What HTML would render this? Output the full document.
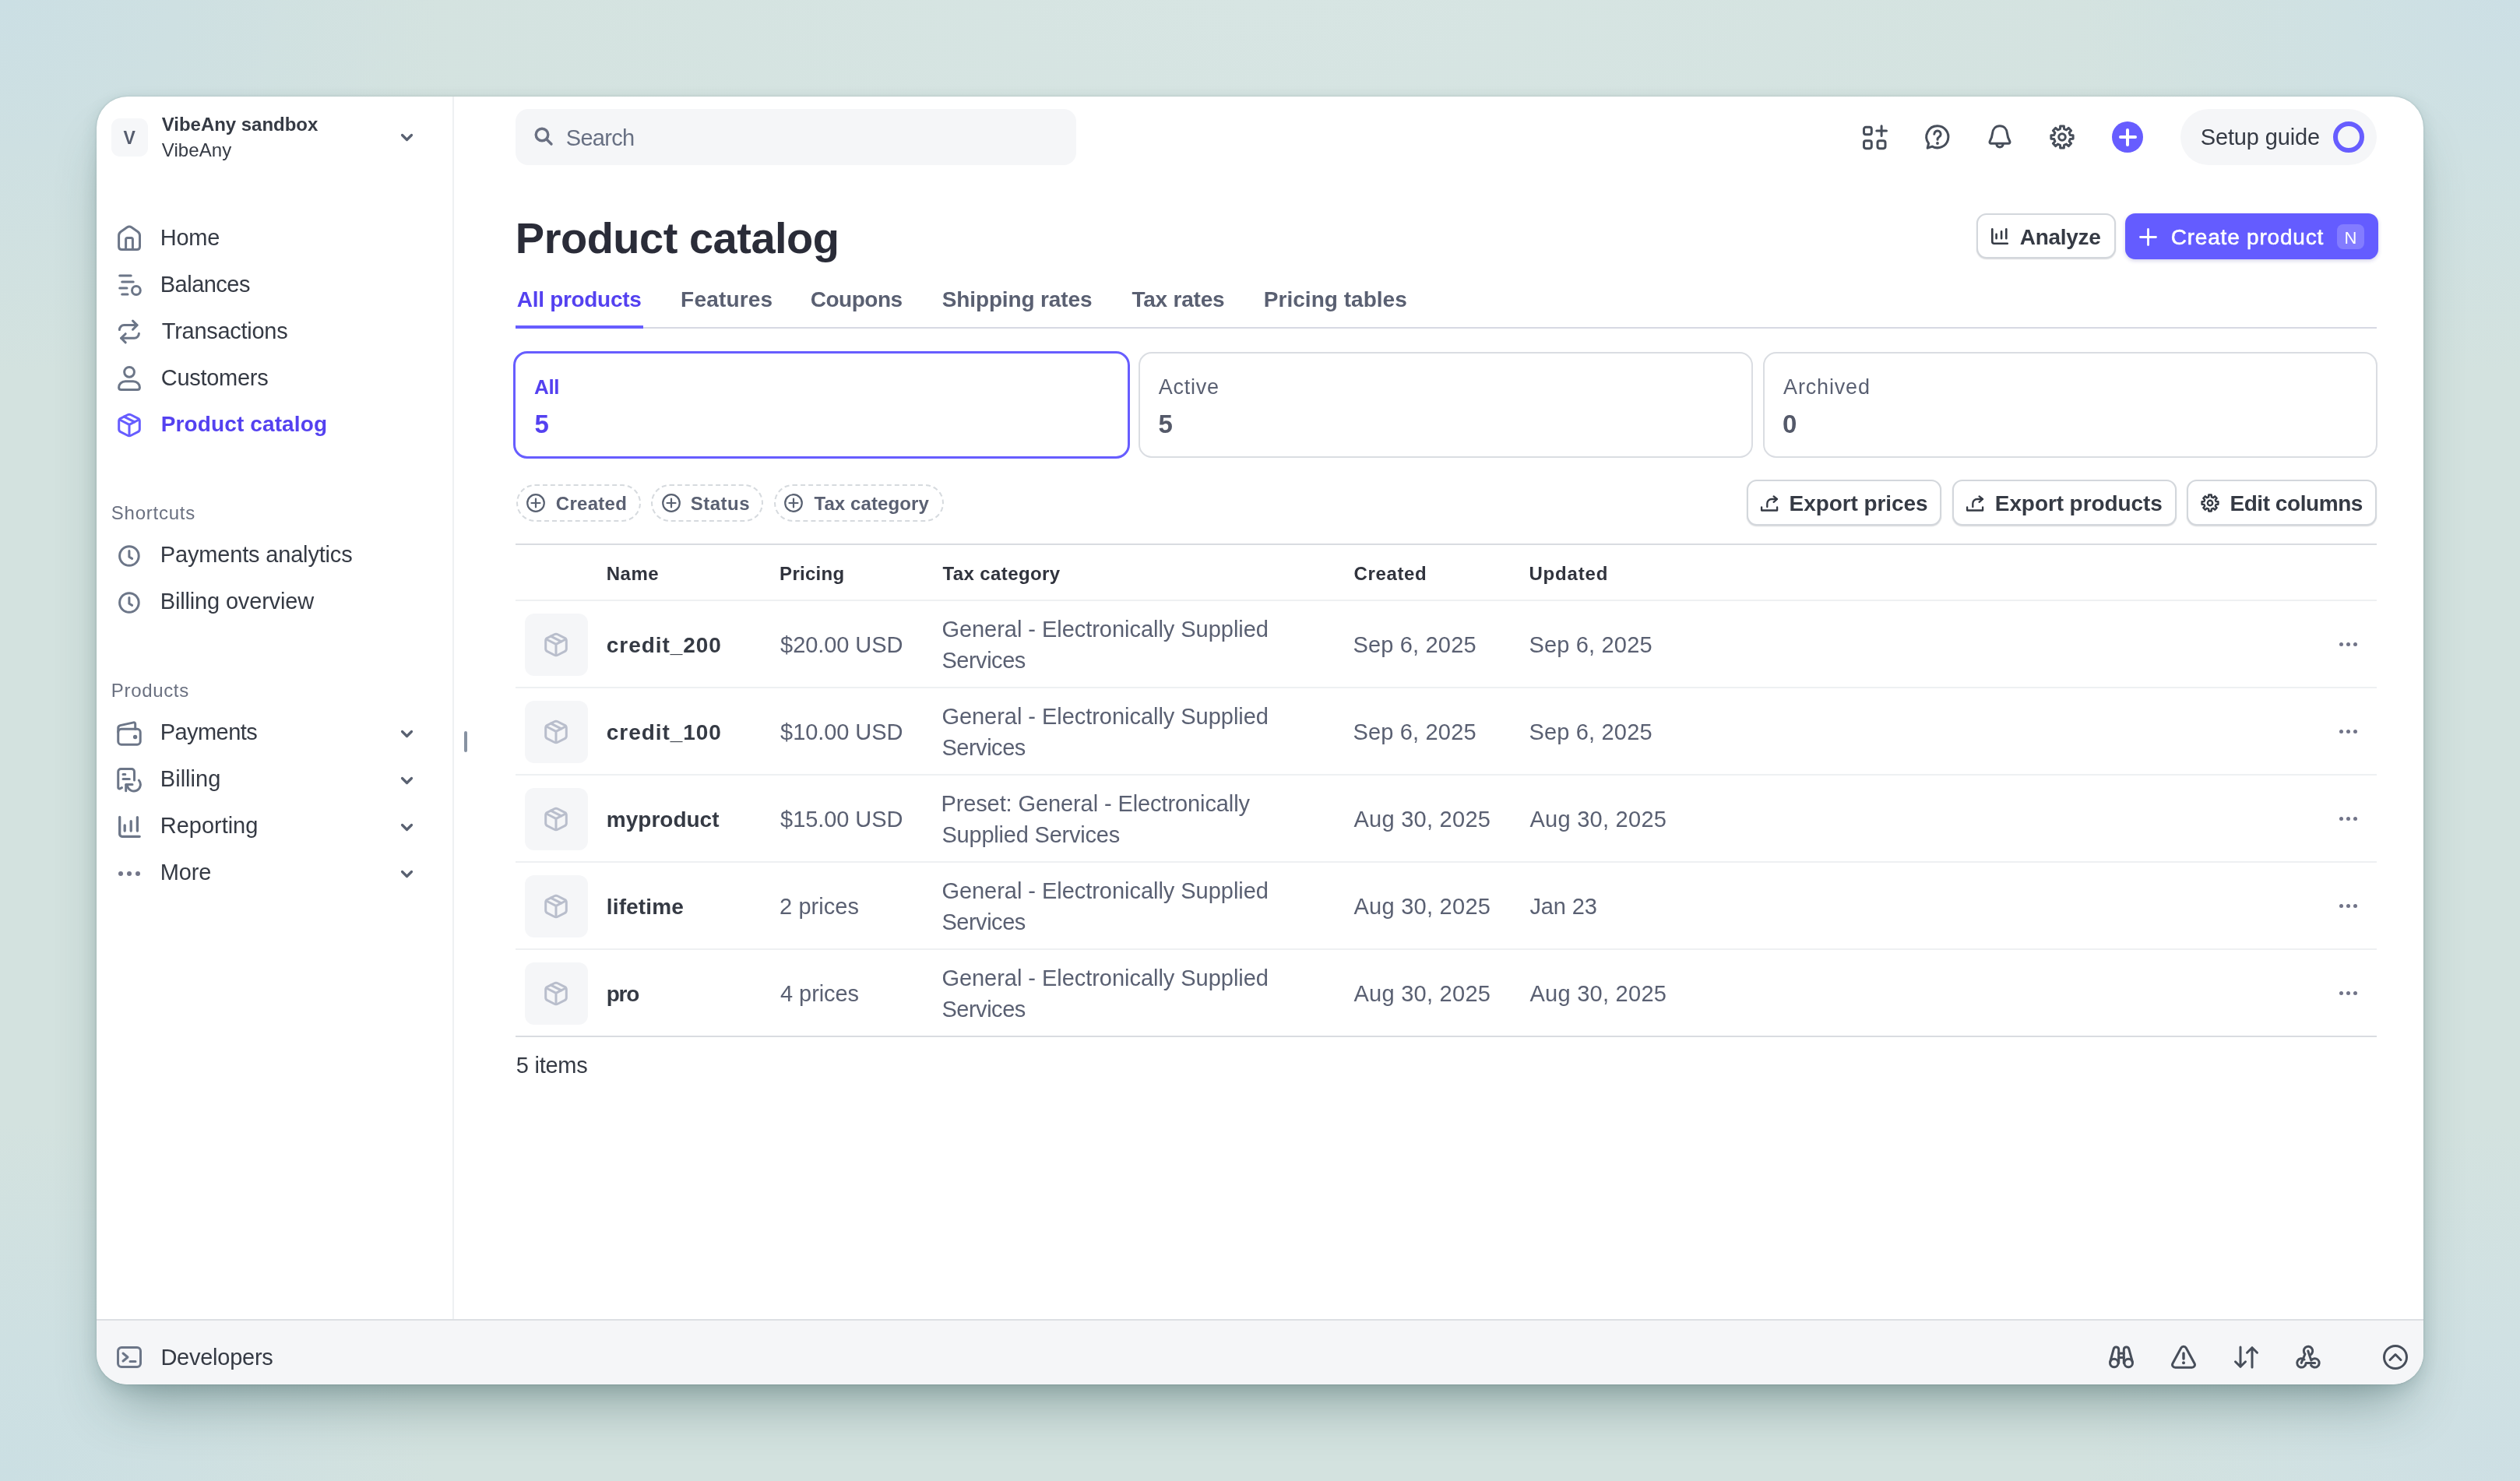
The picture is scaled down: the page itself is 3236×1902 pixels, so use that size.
<!DOCTYPE html>
<html lang="en"><head><meta charset="utf-8"><title>Product catalog</title>
<style>
*{margin:0;padding:0}
html,body{width:3236px;height:1902px;overflow:hidden}
body{position:relative;font-family:"Liberation Sans",sans-serif;
background:
radial-gradient(ellipse 560px 480px at 0% 0%, #cbdfe4 0%, #cee0e2 40%, rgba(208,225,225,0) 100%),
radial-gradient(ellipse 560px 480px at 100% 0%, #ccdfe5 0%, #cfe1e3 40%, rgba(209,226,226,0) 100%),
radial-gradient(ellipse 560px 460px at 0% 100%, #cbdfe3 0%, #cee0e2 40%, rgba(208,225,225,0) 100%),
radial-gradient(ellipse 560px 460px at 100% 100%, #cddfe4 0%, #d0e1e3 40%, rgba(209,226,226,0) 100%),
radial-gradient(ellipse 1400px 500px at 50% 0%, #d7e5e3 0%, rgba(215,229,227,0) 100%),
#d3e2df;}
#win{position:absolute;left:124px;top:124px;width:2988px;height:1654px;background:#fff;border-radius:40px;
box-shadow:0 44px 70px -24px rgba(35,75,75,.42),0 6px 20px rgba(35,75,75,.15),0 0 3px rgba(35,75,75,.22)}
.b,.t,.ic{position:absolute;display:block}
.t{white-space:pre}
.texts{will-change:transform}
h1{font-weight:700}
.ic{overflow:visible}
</style></head>
<body>
<div id="win"></div>
<aside id="sidebar">
<div class="boxes">
<div class="b" style="left:142.5px;top:152px;width:47.5px;height:49px;background:#f6f7f9;border-radius:11px"></div>
<div class="b" style="left:152px;top:1118.9px;width:6px;height:6px;background:#737689;border-radius:50%"></div>
<div class="b" style="left:163px;top:1118.9px;width:6px;height:6px;background:#737689;border-radius:50%"></div>
<div class="b" style="left:174px;top:1118.9px;width:6px;height:6px;background:#737689;border-radius:50%"></div>
</div>
<div class="icons">
<svg class="ic" style="left:150px;top:290px" width="32" height="32" viewBox="0 0 32 32" fill="none" stroke="#6c7688" stroke-width="3" stroke-linecap="round" stroke-linejoin="round" ><path d="M19.02 2.03 L26.86 7.39 Q29.50 9.20 29.50 12.40 L29.50 26.70 Q29.50 30.50 25.70 30.50 L6.40 30.50 Q2.60 30.50 2.60 26.70 L2.60 12.40 Q2.60 9.20 5.24 7.39 L13.08 2.03 Q16.05 0.00 19.02 2.03 Z"/><path d="M11.6 30.5 V17.5 a2 2 0 0 1 2 -2 H18.4 a2 2 0 0 1 2 2 V30.5"/></svg>
<svg class="ic" style="left:150px;top:350px" width="32" height="32" viewBox="0 0 32 32" fill="none" stroke="#6c7688" stroke-width="3" stroke-linecap="round" stroke-linejoin="round" ><path d="M3.7 4 H18.2 M6.7 12 H21.2 M3.7 20 H13 M6.7 28 H14"/><circle cx="24.9" cy="23" r="5.400"/></svg>
<svg class="ic" style="left:150px;top:410px" width="32" height="32" viewBox="0 0 32 32" fill="none" stroke="#6c7688" stroke-width="3" stroke-linecap="round" stroke-linejoin="round" ><path d="M20.5 2 L26 7.6 L20.5 13.2"/><path d="M26 7.6 H9.4 a6 6 0 0 0 -6 6"/><path d="M11.2 18.7 L5.6 24.3 L11.2 29.9"/><path d="M5.6 24.3 H22.4 a6 6 0 0 0 6 -6"/></svg>
<svg class="ic" style="left:150px;top:470px" width="32" height="32" viewBox="0 0 32 32" fill="none" stroke="#6c7688" stroke-width="3" stroke-linecap="round" stroke-linejoin="round" ><circle cx="16.05" cy="7.8" r="6.400"/><path d="M11 19.7 H21 C26 19.7 29.4 23.5 29.4 27.4 C29.4 29.2 28.2 30.4 26.4 30.4 H5.6 C3.8 30.4 2.6 29.2 2.6 27.4 C2.6 23.5 6 19.7 11 19.7 Z"/></svg>
<svg class="ic" style="left:150px;top:530px" width="32" height="32" viewBox="0 0 32 32" fill="none" stroke="#675dff" stroke-width="3" stroke-linecap="round" stroke-linejoin="round" ><path d="M18.14 2.78 L27.16 7.32 Q29.30 8.40 29.30 10.80 L29.30 21.20 Q29.30 23.60 27.16 24.68 L18.14 29.22 Q16.00 30.30 13.86 29.22 L4.84 24.68 Q2.70 23.60 2.70 21.20 L2.70 10.80 Q2.70 8.40 4.84 7.32 L13.86 2.78 Q16.00 1.70 18.14 2.78 Z"/><path d="M3.6 9 L16 15.3 L28.4 9 M16 15.3 V29.6"/><path d="M9.300 5.100 L22.700 11.900"/></svg>
<svg class="ic" style="left:150px;top:698px" width="32" height="32" viewBox="0 0 32 32" fill="none" stroke="#6c7688" stroke-width="3" stroke-linecap="round" stroke-linejoin="round" ><circle cx="15.900" cy="16" r="12.300"/><path d="M15.900 9.500 V17.300 L19.600 19.400"/></svg>
<svg class="ic" style="left:150px;top:758px" width="32" height="32" viewBox="0 0 32 32" fill="none" stroke="#6c7688" stroke-width="3" stroke-linecap="round" stroke-linejoin="round" ><circle cx="15.900" cy="16" r="12.300"/><path d="M15.900 9.500 V17.300 L19.600 19.400"/></svg>
<svg class="ic" style="left:150px;top:926px" width="32" height="32" viewBox="0 0 32 32" fill="none" stroke="#6c7688" stroke-width="3" stroke-linecap="round" stroke-linejoin="round" color="#6c7688"><rect x="1.750" y="10.350" width="28.450" height="19.850" rx="4"/><path d="M1.750 14 V9 a3.500 3.500 0 0 1 2.600 -3.400 L21.500 1.900 a1.800 1.800 0 0 1 2.200 1.750 V10.350"/><circle cx="23.600" cy="20.500" r="1.200" fill="currentColor"/></svg>
<svg class="ic" style="left:150px;top:986px" width="32" height="32" viewBox="0 0 32 32" fill="none" stroke="#6c7688" stroke-width="3" stroke-linecap="round" stroke-linejoin="round" ><path d="M22.5 16 V5 a3.500 3.500 0 0 0 -3.500 -3.500 H5.250 a3.500 3.500 0 0 0 -3.500 3.500 V25.500 a1.500 1.500 0 0 0 2.200 1.300 L6.500 25.600"/><path d="M8 8.500 H10.800 M8 14.400 H16.300"/><path d="M20 21.600 H11.700 V29.800"/><path d="M28.400 16.100 A8.500 8.500 0 1 1 13.600 23.500 L12 22"/></svg>
<svg class="ic" style="left:150px;top:1046px" width="32" height="32" viewBox="0 0 32 32" fill="none" stroke="#6c7688" stroke-width="3" stroke-linecap="round" stroke-linejoin="round" ><path d="M3.700 3.300 V25.300 a3 3 0 0 0 3 3 H29.200" stroke-width="3.300"/><path d="M10.200 21 V13.800 M18.200 21 V8.600 M26.400 21 V3.600" stroke-width="3.300"/></svg>
<svg class="ic" style="left:514.5px;top:172px" width="15" height="9" viewBox="0 0 15 9" fill="none" stroke="#596171" stroke-width="3.2" stroke-linecap="round" stroke-linejoin="round" ><path d="M1.500 1.500 L7.500 7.500 L13.500 1.500"/></svg>
<svg class="ic" style="left:514.5px;top:938px" width="15" height="9" viewBox="0 0 15 9" fill="none" stroke="#596171" stroke-width="3.2" stroke-linecap="round" stroke-linejoin="round" ><path d="M1.500 1.500 L7.500 7.500 L13.500 1.500"/></svg>
<svg class="ic" style="left:514.5px;top:998px" width="15" height="9" viewBox="0 0 15 9" fill="none" stroke="#596171" stroke-width="3.2" stroke-linecap="round" stroke-linejoin="round" ><path d="M1.500 1.500 L7.500 7.500 L13.500 1.500"/></svg>
<svg class="ic" style="left:514.5px;top:1058px" width="15" height="9" viewBox="0 0 15 9" fill="none" stroke="#596171" stroke-width="3.2" stroke-linecap="round" stroke-linejoin="round" ><path d="M1.500 1.500 L7.500 7.500 L13.500 1.500"/></svg>
<svg class="ic" style="left:514.5px;top:1118px" width="15" height="9" viewBox="0 0 15 9" fill="none" stroke="#596171" stroke-width="3.2" stroke-linecap="round" stroke-linejoin="round" ><path d="M1.500 1.500 L7.500 7.500 L13.500 1.500"/></svg>
</div>
<nav class="texts">
<span class="t" style="left:158.50px;top:166px;font-size:23px;line-height:23px;color:#565d6e;font-weight:700;">V</span>
<span class="t" style="left:207.80px;top:148px;font-size:24px;line-height:24px;color:#353a44;font-weight:700;letter-spacing:-0.035px;">VibeAny sandbox</span>
<span class="t" style="left:207.80px;top:181px;font-size:24px;line-height:24px;color:#353a44;letter-spacing:0.074px;">VibeAny</span>
<span class="t" style="left:205.80px;top:291px;font-size:29px;line-height:29px;color:#353a44;letter-spacing:-0.276px;">Home</span>
<span class="t" style="left:205.80px;top:351px;font-size:29px;line-height:29px;color:#353a44;letter-spacing:-0.528px;">Balances</span>
<span class="t" style="left:207.80px;top:411px;font-size:29px;line-height:29px;color:#353a44;letter-spacing:-0.276px;">Transactions</span>
<span class="t" style="left:206.80px;top:471px;font-size:29px;line-height:29px;color:#353a44;letter-spacing:-0.287px;">Customers</span>
<span class="t" style="left:206.80px;top:531px;font-size:28px;line-height:28px;color:#5441f0;font-weight:700;letter-spacing:0.116px;">Product catalog</span>
<span class="t" style="left:142.80px;top:647px;font-size:24px;line-height:24px;color:#6a7080;letter-spacing:0.753px;">Shortcuts</span>
<span class="t" style="left:205.80px;top:698px;font-size:29px;line-height:29px;color:#353a44;letter-spacing:-0.172px;">Payments analytics</span>
<span class="t" style="left:205.80px;top:758px;font-size:29px;line-height:29px;color:#353a44;letter-spacing:-0.168px;">Billing overview</span>
<span class="t" style="left:142.80px;top:875px;font-size:24px;line-height:24px;color:#6a7080;letter-spacing:0.670px;">Products</span>
<span class="t" style="left:205.80px;top:926px;font-size:29px;line-height:29px;color:#353a44;letter-spacing:-0.577px;">Payments</span>
<span class="t" style="left:205.80px;top:986px;font-size:29px;line-height:29px;color:#353a44;letter-spacing:0.026px;">Billing</span>
<span class="t" style="left:205.80px;top:1046px;font-size:29px;line-height:29px;color:#353a44;letter-spacing:-0.027px;">Reporting</span>
<span class="t" style="left:205.80px;top:1106px;font-size:29px;line-height:29px;color:#353a44;letter-spacing:-0.181px;">More</span>
</nav>
</aside>
<main id="content">
<div class="boxes">
<div class="b" style="left:580.5px;top:124px;width:2px;height:1571px;background:#eef0f2"></div>
<div class="b" style="left:596px;top:939px;width:3.5px;height:27px;background:#8792a2;border-radius:2px"></div>
<div class="b" style="left:662px;top:140px;width:720px;height:72px;background:#f5f6f8;border-radius:16px"></div>
<div class="b" style="left:2800px;top:140px;width:252px;height:72px;background:#f5f6f8;border-radius:36px"></div>
<div class="b" style="left:2996px;top:156px;width:40px;height:40px;border:6px solid #675dff;border-radius:50%;box-sizing:border-box"></div>
<div class="b" style="left:2712px;top:156px;width:40px;height:40px;background:#675dff;border-radius:50%"></div>
<div class="b" style="left:2720.5px;top:174.2px;width:23px;height:3.6px;background:#fff;border-radius:2px"></div>
<div class="b" style="left:2730.2px;top:164.5px;width:3.6px;height:23px;background:#fff;border-radius:2px"></div>
<div class="b" style="left:2538px;top:274px;width:178.5px;height:58px;background:#fff;border:2px solid #d3d7dc;border-radius:13px;box-sizing:border-box;box-shadow:0 1px 1.5px rgba(30,35,50,.18)"></div>
<div class="b" style="left:2729px;top:274px;width:324.5px;height:59px;background:#645cff;border-radius:13px;box-shadow:0 2px 5px rgba(60,50,160,.22)"></div>
<div class="b" style="left:3001px;top:287.7px;width:34.7px;height:32.3px;background:rgba(255,255,255,.2);border-radius:8px"></div>
<div class="b" style="left:662px;top:420px;width:2390px;height:2px;background:#d7d9e3"></div>
<div class="b" style="left:662px;top:418px;width:164px;height:4px;background:#675dff"></div>
<div class="b" style="left:659.2px;top:450.8px;width:791.8px;height:138px;border:3px solid #675dff;border-radius:18px;box-sizing:border-box;background:#fff"></div>
<div class="b" style="left:1461.9px;top:452.3px;width:789.4px;height:135.3px;border:2px solid #dadde2;border-radius:17px;box-sizing:border-box;background:#fff"></div>
<div class="b" style="left:2263.6px;top:452.3px;width:789.4px;height:135.3px;border:2px solid #dadde2;border-radius:17px;box-sizing:border-box;background:#fff"></div>
<div class="b" style="left:663px;top:622px;width:159.5px;height:48px;border:2px dashed #d6dade;border-radius:24px;box-sizing:border-box"></div>
<div class="b" style="left:836px;top:622px;width:144px;height:48px;border:2px dashed #d6dade;border-radius:24px;box-sizing:border-box"></div>
<div class="b" style="left:994px;top:622px;width:218.3px;height:48px;border:2px dashed #d6dade;border-radius:24px;box-sizing:border-box"></div>
<div class="b" style="left:2242.5px;top:616px;width:250.5px;height:58.5px;background:#fff;border:2px solid #d3d7dc;border-radius:13px;box-sizing:border-box;box-shadow:0 1px 1.5px rgba(30,35,50,.18)"></div>
<div class="b" style="left:2506.7px;top:616px;width:288px;height:58.5px;background:#fff;border:2px solid #d3d7dc;border-radius:13px;box-sizing:border-box;box-shadow:0 1px 1.5px rgba(30,35,50,.18)"></div>
<div class="b" style="left:2808.3px;top:616px;width:244.2px;height:58.5px;background:#fff;border:2px solid #d3d7dc;border-radius:13px;box-sizing:border-box;box-shadow:0 1px 1.5px rgba(30,35,50,.18)"></div>
<div class="b" style="left:662px;top:698px;width:2390px;height:2px;background:#d9dce1"></div>
<div class="b" style="left:662px;top:770px;width:2390px;height:2px;background:#eef0f2"></div>
<div class="b" style="left:662px;top:882px;width:2390px;height:2px;background:#eef0f2"></div>
<div class="b" style="left:662px;top:994px;width:2390px;height:2px;background:#eef0f2"></div>
<div class="b" style="left:662px;top:1106px;width:2390px;height:2px;background:#eef0f2"></div>
<div class="b" style="left:662px;top:1218px;width:2390px;height:2px;background:#eef0f2"></div>
<div class="b" style="left:662px;top:1330px;width:2390px;height:2px;background:#d9dce1"></div>
<div class="b" style="left:674.3px;top:788.0px;width:80.3px;height:80px;background:#f5f6f8;border-radius:12px"></div>
<div class="b" style="left:3003.5px;top:825.3000000000001px;width:5px;height:5px;background:#717488;border-radius:50%"></div>
<div class="b" style="left:3012.8px;top:825.3000000000001px;width:5px;height:5px;background:#717488;border-radius:50%"></div>
<div class="b" style="left:3022.2px;top:825.3000000000001px;width:5px;height:5px;background:#717488;border-radius:50%"></div>
<div class="b" style="left:674.3px;top:900.0px;width:80.3px;height:80px;background:#f5f6f8;border-radius:12px"></div>
<div class="b" style="left:3003.5px;top:937.3000000000001px;width:5px;height:5px;background:#717488;border-radius:50%"></div>
<div class="b" style="left:3012.8px;top:937.3000000000001px;width:5px;height:5px;background:#717488;border-radius:50%"></div>
<div class="b" style="left:3022.2px;top:937.3000000000001px;width:5px;height:5px;background:#717488;border-radius:50%"></div>
<div class="b" style="left:674.3px;top:1012.0px;width:80.3px;height:80px;background:#f5f6f8;border-radius:12px"></div>
<div class="b" style="left:3003.5px;top:1049.3px;width:5px;height:5px;background:#717488;border-radius:50%"></div>
<div class="b" style="left:3012.8px;top:1049.3px;width:5px;height:5px;background:#717488;border-radius:50%"></div>
<div class="b" style="left:3022.2px;top:1049.3px;width:5px;height:5px;background:#717488;border-radius:50%"></div>
<div class="b" style="left:674.3px;top:1124.0px;width:80.3px;height:80px;background:#f5f6f8;border-radius:12px"></div>
<div class="b" style="left:3003.5px;top:1161.3px;width:5px;height:5px;background:#717488;border-radius:50%"></div>
<div class="b" style="left:3012.8px;top:1161.3px;width:5px;height:5px;background:#717488;border-radius:50%"></div>
<div class="b" style="left:3022.2px;top:1161.3px;width:5px;height:5px;background:#717488;border-radius:50%"></div>
<div class="b" style="left:674.3px;top:1236.0px;width:80.3px;height:80px;background:#f5f6f8;border-radius:12px"></div>
<div class="b" style="left:3003.5px;top:1273.3px;width:5px;height:5px;background:#717488;border-radius:50%"></div>
<div class="b" style="left:3012.8px;top:1273.3px;width:5px;height:5px;background:#717488;border-radius:50%"></div>
<div class="b" style="left:3022.2px;top:1273.3px;width:5px;height:5px;background:#717488;border-radius:50%"></div>
</div>
<div class="icons">
<svg class="ic" style="left:686px;top:163px" width="24" height="24" viewBox="0 0 24 24" fill="none" stroke="#6a7082" stroke-width="3.4" stroke-linecap="round" stroke-linejoin="round" ><circle cx="10" cy="10" r="7.800"/><path d="M16 16 L22 22"/></svg>
<svg class="ic" style="left:2392px;top:161px" width="32" height="32" viewBox="0 0 32 32" fill="none" stroke="#474e5a" stroke-width="3" stroke-linecap="round" stroke-linejoin="round" ><rect x="1.500" y="2.200" width="9.800" height="9.600" rx="2.600"/><rect x="1.500" y="19.700" width="9.800" height="10" rx="2.600"/><rect x="19" y="19.700" width="10" height="10" rx="2.600"/><path d="M17.800 7 H30.500 M24.100 0.800 V13.500"/></svg>
<svg class="ic" style="left:2472px;top:160px" width="32" height="32" viewBox="0 0 32 32" fill="none" stroke="#474e5a" stroke-width="3" stroke-linecap="round" stroke-linejoin="round" color="#474e5a"><path d="M16 1.800 a14 14 0 1 1 -6.800 26.300 L3.200 30.200 L4.600 24.200 A14 14 0 0 1 16 1.800 Z"/><path d="M11.800 12.200 a4.200 4.200 0 1 1 6.400 3.600 c-1.400 0.900 -2.200 1.700 -2.200 3.400" /><circle cx="16" cy="24" r="1.100" fill="currentColor" stroke-width="1.600"/></svg>
<svg class="ic" style="left:2552px;top:160px" width="32" height="32" viewBox="0 0 32 32" fill="none" stroke="#474e5a" stroke-width="3" stroke-linecap="round" stroke-linejoin="round" ><path d="M16 1.800 c-5.500 0 -9 4 -9.500 9.500 c-0.400 4.500 -1.800 7.500 -3.300 10.200 c-0.700 1.300 0.200 2.800 1.700 2.800 H27.100 c1.500 0 2.400 -1.500 1.700 -2.800 c-1.500 -2.700 -2.900 -5.700 -3.300 -10.200 C25 5.800 21.500 1.800 16 1.800 Z"/><path d="M11.800 25.500 a4.300 4.300 0 0 0 8.400 0"/></svg>
<svg class="ic" style="left:2632px;top:160px" width="32" height="32" viewBox="0 0 32 32" fill="none" stroke="#474e5a" stroke-width="3" stroke-linecap="round" stroke-linejoin="round" ><path d="M13.44 5.71 L13.65 1.89 L18.35 1.89 L18.56 5.71 L21.47 6.92 L24.31 4.37 L27.63 7.69 L25.08 10.53 L26.29 13.44 L30.11 13.65 L30.11 18.35 L26.29 18.56 L25.08 21.47 L27.63 24.31 L24.31 27.63 L21.47 25.08 L18.56 26.29 L18.35 30.11 L13.65 30.11 L13.44 26.29 L10.53 25.08 L7.69 27.63 L4.37 24.31 L6.92 21.47 L5.71 18.56 L1.89 18.35 L1.89 13.65 L5.71 13.44 L6.92 10.53 L4.37 7.69 L7.69 4.37 L10.53 6.92 Z"/><circle cx="16" cy="16" r="4.300"/></svg>
<svg class="ic" style="left:2556.5px;top:293px" width="22" height="22" viewBox="0 0 22 22" fill="none" stroke="#353a44" stroke-width="2.6" stroke-linecap="round" stroke-linejoin="round" ><path d="M1.300 1.300 V17.200 a2.500 2.500 0 0 0 2.500 2.500 H20.800"/><path d="M6.600 13.200 V7.700 M13.100 13.200 V4.200 M19.300 13.200 V1.300"/></svg>
<svg class="ic" style="left:2747.3px;top:292.7px" width="23" height="23" viewBox="0 0 23 23" fill="none" stroke="#fff" stroke-width="2.8" stroke-linecap="round" stroke-linejoin="round" ><path d="M11.500 1.500 V21.500 M1.500 11.500 H21.500"/></svg>
<svg class="ic" style="left:2260px;top:635.5px" width="24" height="23" viewBox="0 0 24 23" fill="none" stroke="#353a44" stroke-width="2.3" stroke-linecap="round" stroke-linejoin="round" ><path d="M2.100 15.500 V19.500 H22.100 V15.500"/><path d="M17.600 1.400 L22 5 L17.600 8.800"/><path d="M21.600 5 H15 a5.700 5.700 0 0 0 -5.700 5.700 V15"/></svg>
<svg class="ic" style="left:2524px;top:635.5px" width="24" height="23" viewBox="0 0 24 23" fill="none" stroke="#353a44" stroke-width="2.3" stroke-linecap="round" stroke-linejoin="round" ><path d="M2.100 15.500 V19.500 H22.100 V15.500"/><path d="M17.600 1.400 L22 5 L17.600 8.800"/><path d="M21.600 5 H15 a5.700 5.700 0 0 0 -5.700 5.700 V15"/></svg>
<svg class="ic" style="left:2826px;top:634px" width="24" height="24" viewBox="0 0 24 24" fill="none" stroke="#353a44" stroke-width="2.4" stroke-linecap="round" stroke-linejoin="round" ><path d="M10.10 4.33 L10.26 1.54 L13.74 1.54 L13.90 4.33 L16.07 5.23 L18.16 3.38 L20.62 5.84 L18.77 7.93 L19.67 10.10 L22.46 10.26 L22.46 13.74 L19.67 13.90 L18.77 16.07 L20.62 18.16 L18.16 20.62 L16.07 18.77 L13.90 19.67 L13.74 22.46 L10.26 22.46 L10.10 19.67 L7.93 18.77 L5.84 20.62 L3.38 18.16 L5.23 16.07 L4.33 13.90 L1.54 13.74 L1.54 10.26 L4.33 10.10 L5.23 7.93 L3.38 5.84 L5.84 3.38 L7.93 5.23 Z"/><circle cx="12" cy="12" r="3.200"/></svg>
<svg class="ic" style="left:676px;top:634px" width="24" height="24" viewBox="0 0 24 24" fill="none" stroke="#596171" stroke-width="2.2" stroke-linecap="round" stroke-linejoin="round" ><circle cx="12" cy="12" r="10.800"/><path d="M12 6.500 V17.500 M6.500 12 H17.500"/></svg>
<svg class="ic" style="left:850px;top:634px" width="24" height="24" viewBox="0 0 24 24" fill="none" stroke="#596171" stroke-width="2.2" stroke-linecap="round" stroke-linejoin="round" ><circle cx="12" cy="12" r="10.800"/><path d="M12 6.500 V17.500 M6.500 12 H17.500"/></svg>
<svg class="ic" style="left:1007px;top:634px" width="24" height="24" viewBox="0 0 24 24" fill="none" stroke="#596171" stroke-width="2.2" stroke-linecap="round" stroke-linejoin="round" ><circle cx="12" cy="12" r="10.800"/><path d="M12 6.500 V17.500 M6.500 12 H17.500"/></svg>
<svg class="ic" style="left:698.4px;top:811.9000000000001px" width="32" height="32" viewBox="0 0 32 32" fill="none" stroke="#b9becc" stroke-width="3" stroke-linecap="round" stroke-linejoin="round" ><path d="M18.14 2.78 L27.16 7.32 Q29.30 8.40 29.30 10.80 L29.30 21.20 Q29.30 23.60 27.16 24.68 L18.14 29.22 Q16.00 30.30 13.86 29.22 L4.84 24.68 Q2.70 23.60 2.70 21.20 L2.70 10.80 Q2.70 8.40 4.84 7.32 L13.86 2.78 Q16.00 1.70 18.14 2.78 Z"/><path d="M3.6 9 L16 15.3 L28.4 9 M16 15.3 V29.6"/><path d="M9.300 5.100 L22.700 11.900"/></svg>
<svg class="ic" style="left:698.4px;top:923.9000000000001px" width="32" height="32" viewBox="0 0 32 32" fill="none" stroke="#b9becc" stroke-width="3" stroke-linecap="round" stroke-linejoin="round" ><path d="M18.14 2.78 L27.16 7.32 Q29.30 8.40 29.30 10.80 L29.30 21.20 Q29.30 23.60 27.16 24.68 L18.14 29.22 Q16.00 30.30 13.86 29.22 L4.84 24.68 Q2.70 23.60 2.70 21.20 L2.70 10.80 Q2.70 8.40 4.84 7.32 L13.86 2.78 Q16.00 1.70 18.14 2.78 Z"/><path d="M3.6 9 L16 15.3 L28.4 9 M16 15.3 V29.6"/><path d="M9.300 5.100 L22.700 11.900"/></svg>
<svg class="ic" style="left:698.4px;top:1035.9px" width="32" height="32" viewBox="0 0 32 32" fill="none" stroke="#b9becc" stroke-width="3" stroke-linecap="round" stroke-linejoin="round" ><path d="M18.14 2.78 L27.16 7.32 Q29.30 8.40 29.30 10.80 L29.30 21.20 Q29.30 23.60 27.16 24.68 L18.14 29.22 Q16.00 30.30 13.86 29.22 L4.84 24.68 Q2.70 23.60 2.70 21.20 L2.70 10.80 Q2.70 8.40 4.84 7.32 L13.86 2.78 Q16.00 1.70 18.14 2.78 Z"/><path d="M3.6 9 L16 15.3 L28.4 9 M16 15.3 V29.6"/><path d="M9.300 5.100 L22.700 11.900"/></svg>
<svg class="ic" style="left:698.4px;top:1147.9px" width="32" height="32" viewBox="0 0 32 32" fill="none" stroke="#b9becc" stroke-width="3" stroke-linecap="round" stroke-linejoin="round" ><path d="M18.14 2.78 L27.16 7.32 Q29.30 8.40 29.30 10.80 L29.30 21.20 Q29.30 23.60 27.16 24.68 L18.14 29.22 Q16.00 30.30 13.86 29.22 L4.84 24.68 Q2.70 23.60 2.70 21.20 L2.70 10.80 Q2.70 8.40 4.84 7.32 L13.86 2.78 Q16.00 1.70 18.14 2.78 Z"/><path d="M3.6 9 L16 15.3 L28.4 9 M16 15.3 V29.6"/><path d="M9.300 5.100 L22.700 11.900"/></svg>
<svg class="ic" style="left:698.4px;top:1259.9px" width="32" height="32" viewBox="0 0 32 32" fill="none" stroke="#b9becc" stroke-width="3" stroke-linecap="round" stroke-linejoin="round" ><path d="M18.14 2.78 L27.16 7.32 Q29.30 8.40 29.30 10.80 L29.30 21.20 Q29.30 23.60 27.16 24.68 L18.14 29.22 Q16.00 30.30 13.86 29.22 L4.84 24.68 Q2.70 23.60 2.70 21.20 L2.70 10.80 Q2.70 8.40 4.84 7.32 L13.86 2.78 Q16.00 1.70 18.14 2.78 Z"/><path d="M3.6 9 L16 15.3 L28.4 9 M16 15.3 V29.6"/><path d="M9.300 5.100 L22.700 11.900"/></svg>
</div>
<div class="texts">
<span class="t" style="left:726.80px;top:163px;font-size:29px;line-height:29px;color:#687083;letter-spacing:-0.731px;">Search</span>
<span class="t" style="left:2825.80px;top:162px;font-size:29px;line-height:29px;color:#353a44;letter-spacing:-0.157px;">Setup guide</span>
<h1 class="t" style="left:661.80px;top:278px;font-size:56px;line-height:56px;color:#2a2c38;font-weight:700;letter-spacing:-0.497px;">Product catalog</h1>
<span class="t" style="left:2593.80px;top:291px;font-size:28px;line-height:28px;color:#353a44;font-weight:700;letter-spacing:-0.308px;">Analyze</span>
<span class="t" style="left:2787.68px;top:291px;font-size:28px;line-height:28px;color:#ffffff;-webkit-text-stroke:0.55px #ffffff;letter-spacing:0.801px;">Create product</span>
<span class="t" style="left:3010.60px;top:295px;font-size:22px;line-height:22px;color:#ffffff;">N</span>
<span class="t" style="left:663.80px;top:371px;font-size:28px;line-height:28px;color:#5441f0;font-weight:700;letter-spacing:-0.306px;">All products</span>
<span class="t" style="left:874.10px;top:371px;font-size:28px;line-height:28px;color:#5a6072;font-weight:700;letter-spacing:0.179px;">Features</span>
<span class="t" style="left:1040.80px;top:371px;font-size:28px;line-height:28px;color:#5a6072;font-weight:700;letter-spacing:-0.506px;">Coupons</span>
<span class="t" style="left:1209.80px;top:371px;font-size:28px;line-height:28px;color:#5a6072;font-weight:700;letter-spacing:-0.138px;">Shipping rates</span>
<span class="t" style="left:1453.40px;top:371px;font-size:28px;line-height:28px;color:#5a6072;font-weight:700;letter-spacing:-0.202px;">Tax rates</span>
<span class="t" style="left:1622.80px;top:371px;font-size:28px;line-height:28px;color:#5a6072;font-weight:700;letter-spacing:0.028px;">Pricing tables</span>
<span class="t" style="left:686.10px;top:484px;font-size:26px;line-height:26px;color:#5441f0;font-weight:700;letter-spacing:-0.450px;">All</span>
<span class="t" style="left:686.40px;top:528px;font-size:33px;line-height:33px;color:#5441f0;font-weight:700;">5</span>
<span class="t" style="left:1487.80px;top:484px;font-size:27px;line-height:27px;color:#5a6072;letter-spacing:0.718px;">Active</span>
<span class="t" style="left:1487.40px;top:528px;font-size:33px;line-height:33px;color:#545969;font-weight:700;">5</span>
<span class="t" style="left:2290.10px;top:484px;font-size:27px;line-height:27px;color:#5a6072;letter-spacing:0.824px;">Archived</span>
<span class="t" style="left:2289.00px;top:528px;font-size:33px;line-height:33px;color:#545969;font-weight:700;">0</span>
<span class="t" style="left:713.80px;top:635px;font-size:24px;line-height:24px;color:#5a6072;font-weight:700;letter-spacing:0.282px;">Created</span>
<span class="t" style="left:886.80px;top:635px;font-size:24px;line-height:24px;color:#5a6072;font-weight:700;letter-spacing:0.480px;">Status</span>
<span class="t" style="left:1045.40px;top:635px;font-size:24px;line-height:24px;color:#5a6072;font-weight:700;letter-spacing:0.106px;">Tax category</span>
<span class="t" style="left:2297.60px;top:633px;font-size:28px;line-height:28px;color:#353a44;font-weight:700;letter-spacing:-0.082px;">Export prices</span>
<span class="t" style="left:2561.80px;top:633px;font-size:28px;line-height:28px;color:#353a44;font-weight:700;letter-spacing:-0.090px;">Export products</span>
<span class="t" style="left:2863.40px;top:633px;font-size:28px;line-height:28px;color:#353a44;font-weight:700;letter-spacing:-0.438px;">Edit columns</span>
<span class="t" style="left:778.80px;top:725px;font-size:24px;line-height:24px;color:#30333d;font-weight:700;letter-spacing:0.460px;">Name</span>
<span class="t" style="left:1001.10px;top:725px;font-size:24px;line-height:24px;color:#30333d;font-weight:700;letter-spacing:0.285px;">Pricing</span>
<span class="t" style="left:1210.40px;top:725px;font-size:24px;line-height:24px;color:#30333d;font-weight:700;letter-spacing:0.406px;">Tax category</span>
<span class="t" style="left:1738.40px;top:725px;font-size:24px;line-height:24px;color:#30333d;font-weight:700;letter-spacing:0.665px;">Created</span>
<span class="t" style="left:1963.40px;top:725px;font-size:24px;line-height:24px;color:#30333d;font-weight:700;letter-spacing:0.843px;">Updated</span>
<span class="t" style="left:778.80px;top:815px;font-size:28px;line-height:28px;color:#353a44;font-weight:700;letter-spacing:0.937px;">credit_200</span>
<span class="t" style="left:1002.10px;top:814px;font-size:29px;line-height:29px;color:#5a6072;letter-spacing:-0.071px;">$20.00 USD</span>
<span class="t" style="left:1209.40px;top:794px;font-size:29px;line-height:29px;color:#5a6072;letter-spacing:-0.037px;">General - Electronically Supplied</span>
<span class="t" style="left:1209.40px;top:834px;font-size:29px;line-height:29px;color:#5a6072;letter-spacing:-0.471px;">Services</span>
<span class="t" style="left:1737.40px;top:814px;font-size:29px;line-height:29px;color:#5a6072;letter-spacing:0.182px;">Sep 6, 2025</span>
<span class="t" style="left:1963.40px;top:814px;font-size:29px;line-height:29px;color:#5a6072;letter-spacing:0.182px;">Sep 6, 2025</span>
<span class="t" style="left:778.80px;top:927px;font-size:28px;line-height:28px;color:#353a44;font-weight:700;letter-spacing:0.937px;">credit_100</span>
<span class="t" style="left:1002.10px;top:926px;font-size:29px;line-height:29px;color:#5a6072;letter-spacing:-0.071px;">$10.00 USD</span>
<span class="t" style="left:1209.40px;top:906px;font-size:29px;line-height:29px;color:#5a6072;letter-spacing:-0.037px;">General - Electronically Supplied</span>
<span class="t" style="left:1209.40px;top:946px;font-size:29px;line-height:29px;color:#5a6072;letter-spacing:-0.471px;">Services</span>
<span class="t" style="left:1737.40px;top:926px;font-size:29px;line-height:29px;color:#5a6072;letter-spacing:0.182px;">Sep 6, 2025</span>
<span class="t" style="left:1963.40px;top:926px;font-size:29px;line-height:29px;color:#5a6072;letter-spacing:0.182px;">Sep 6, 2025</span>
<span class="t" style="left:778.80px;top:1039px;font-size:28px;line-height:28px;color:#353a44;font-weight:700;letter-spacing:0.006px;">myproduct</span>
<span class="t" style="left:1002.10px;top:1038px;font-size:29px;line-height:29px;color:#5a6072;letter-spacing:-0.071px;">$15.00 USD</span>
<span class="t" style="left:1208.40px;top:1018px;font-size:29px;line-height:29px;color:#5a6072;letter-spacing:-0.100px;">Preset: General - Electronically</span>
<span class="t" style="left:1209.40px;top:1058px;font-size:29px;line-height:29px;color:#5a6072;letter-spacing:-0.202px;">Supplied Services</span>
<span class="t" style="left:1738.40px;top:1038px;font-size:29px;line-height:29px;color:#5a6072;letter-spacing:0.272px;">Aug 30, 2025</span>
<span class="t" style="left:1964.40px;top:1038px;font-size:29px;line-height:29px;color:#5a6072;letter-spacing:0.272px;">Aug 30, 2025</span>
<span class="t" style="left:778.80px;top:1151px;font-size:28px;line-height:28px;color:#353a44;font-weight:700;letter-spacing:0.135px;">lifetime</span>
<span class="t" style="left:1001.10px;top:1150px;font-size:29px;line-height:29px;color:#5a6072;letter-spacing:0.051px;">2 prices</span>
<span class="t" style="left:1209.40px;top:1130px;font-size:29px;line-height:29px;color:#5a6072;letter-spacing:-0.037px;">General - Electronically Supplied</span>
<span class="t" style="left:1209.40px;top:1170px;font-size:29px;line-height:29px;color:#5a6072;letter-spacing:-0.471px;">Services</span>
<span class="t" style="left:1738.40px;top:1150px;font-size:29px;line-height:29px;color:#5a6072;letter-spacing:0.272px;">Aug 30, 2025</span>
<span class="t" style="left:1964.40px;top:1150px;font-size:29px;line-height:29px;color:#5a6072;letter-spacing:-0.108px;">Jan 23</span>
<span class="t" style="left:778.80px;top:1263px;font-size:28px;line-height:28px;color:#353a44;font-weight:700;letter-spacing:-1.300px;">pro</span>
<span class="t" style="left:1002.10px;top:1262px;font-size:29px;line-height:29px;color:#5a6072;letter-spacing:-0.092px;">4 prices</span>
<span class="t" style="left:1209.40px;top:1242px;font-size:29px;line-height:29px;color:#5a6072;letter-spacing:-0.037px;">General - Electronically Supplied</span>
<span class="t" style="left:1209.40px;top:1282px;font-size:29px;line-height:29px;color:#5a6072;letter-spacing:-0.471px;">Services</span>
<span class="t" style="left:1738.40px;top:1262px;font-size:29px;line-height:29px;color:#5a6072;letter-spacing:0.272px;">Aug 30, 2025</span>
<span class="t" style="left:1964.40px;top:1262px;font-size:29px;line-height:29px;color:#5a6072;letter-spacing:0.272px;">Aug 30, 2025</span>
<span class="t" style="left:662.80px;top:1354px;font-size:29px;line-height:29px;color:#353a44;letter-spacing:-0.262px;">5 items</span>
</div>
</main>
<footer id="devbar">
<div class="boxes">
<div class="b" style="left:124px;top:1694px;width:2988px;height:84px;background:#f5f6f8;border-top:2px solid #dcdfe3;box-sizing:border-box;border-radius:0 0 40px 40px"></div>
</div>
<div class="icons">
<svg class="ic" style="left:150px;top:1727px" width="32" height="32" viewBox="0 0 32 32" fill="none" stroke="#6c7688" stroke-width="3" stroke-linecap="round" stroke-linejoin="round" ><rect x="1.500" y="3.500" width="29" height="25" rx="4.500"/><path d="M8 11 L14 16 L8 21 M17 21.500 H24"/></svg>
<svg class="ic" style="left:2708px;top:1727px" width="32" height="32" viewBox="0 0 32 32" fill="none" stroke="#474e5a" stroke-width="3" stroke-linecap="round" stroke-linejoin="round" ><circle cx="6.800" cy="23.500" r="5.300"/><circle cx="25.200" cy="23.500" r="5.300"/><path d="M1.700 22 L6.200 5.500 a3.300 3.300 0 0 1 6.500 0.900 V23.500"/><path d="M30.300 22 L25.800 5.500 a3.300 3.300 0 0 0 -6.500 0.900 V23.500"/><path d="M12.700 11 H19.300 M12.700 16.500 H19.300"/></svg>
<svg class="ic" style="left:2788px;top:1727px" width="32" height="32" viewBox="0 0 32 32" fill="none" stroke="#474e5a" stroke-width="3" stroke-linecap="round" stroke-linejoin="round" color="#474e5a"><path d="M16 2.200 c1.400 0 2.600 0.700 3.300 2 L30 24 c1.300 2.400 -0.400 5.300 -3.300 5.300 H5.300 C2.400 29.300 0.700 26.400 2 24 L12.700 4.200 c0.700 -1.300 1.900 -2 3.300 -2 Z"/><path d="M16 11 V18" stroke-width="3.400"/><circle cx="16" cy="23.300" r="1.300" fill="currentColor" stroke-width="1.400"/></svg>
<svg class="ic" style="left:2868px;top:1727px" width="32" height="32" viewBox="0 0 32 32" fill="none" stroke="#474e5a" stroke-width="3" stroke-linecap="round" stroke-linejoin="round" ><path d="M9 3 V28.300 M2.500 21.800 L9 28.300 L15.500 21.800"/><path d="M24 29 V3.700 M17.500 10.200 L24 3.700 L30.500 10.200"/></svg>
<svg class="ic" style="left:2948px;top:1727px" width="32" height="32" viewBox="0 0 32 32" fill="none" stroke="#474e5a" stroke-width="3" stroke-linecap="round" stroke-linejoin="round" ><path d="M7.200 23.400 L12 12 A5.700 5.700 0 1 1 19.300 12.650"/><path d="M15.800 8 L19.830 20.130 A5.700 5.700 0 1 1 19.560 26.250"/><path d="M24.700 23.400 H13.100 A5.700 5.700 0 1 1 11.060 19.030"/></svg>
<svg class="ic" style="left:3060px;top:1727px" width="32" height="32" viewBox="0 0 32 32" fill="none" stroke="#474e5a" stroke-width="3" stroke-linecap="round" stroke-linejoin="round" ><circle cx="16" cy="16" r="14.500"/><path d="M9 19.500 L16 12.500 L23 19.500"/></svg>
</div>
<div class="texts">
<span class="t" style="left:206.40px;top:1729px;font-size:29px;line-height:29px;color:#353a44;letter-spacing:-0.254px;">Developers</span>
</div>
</footer>
</body></html>
